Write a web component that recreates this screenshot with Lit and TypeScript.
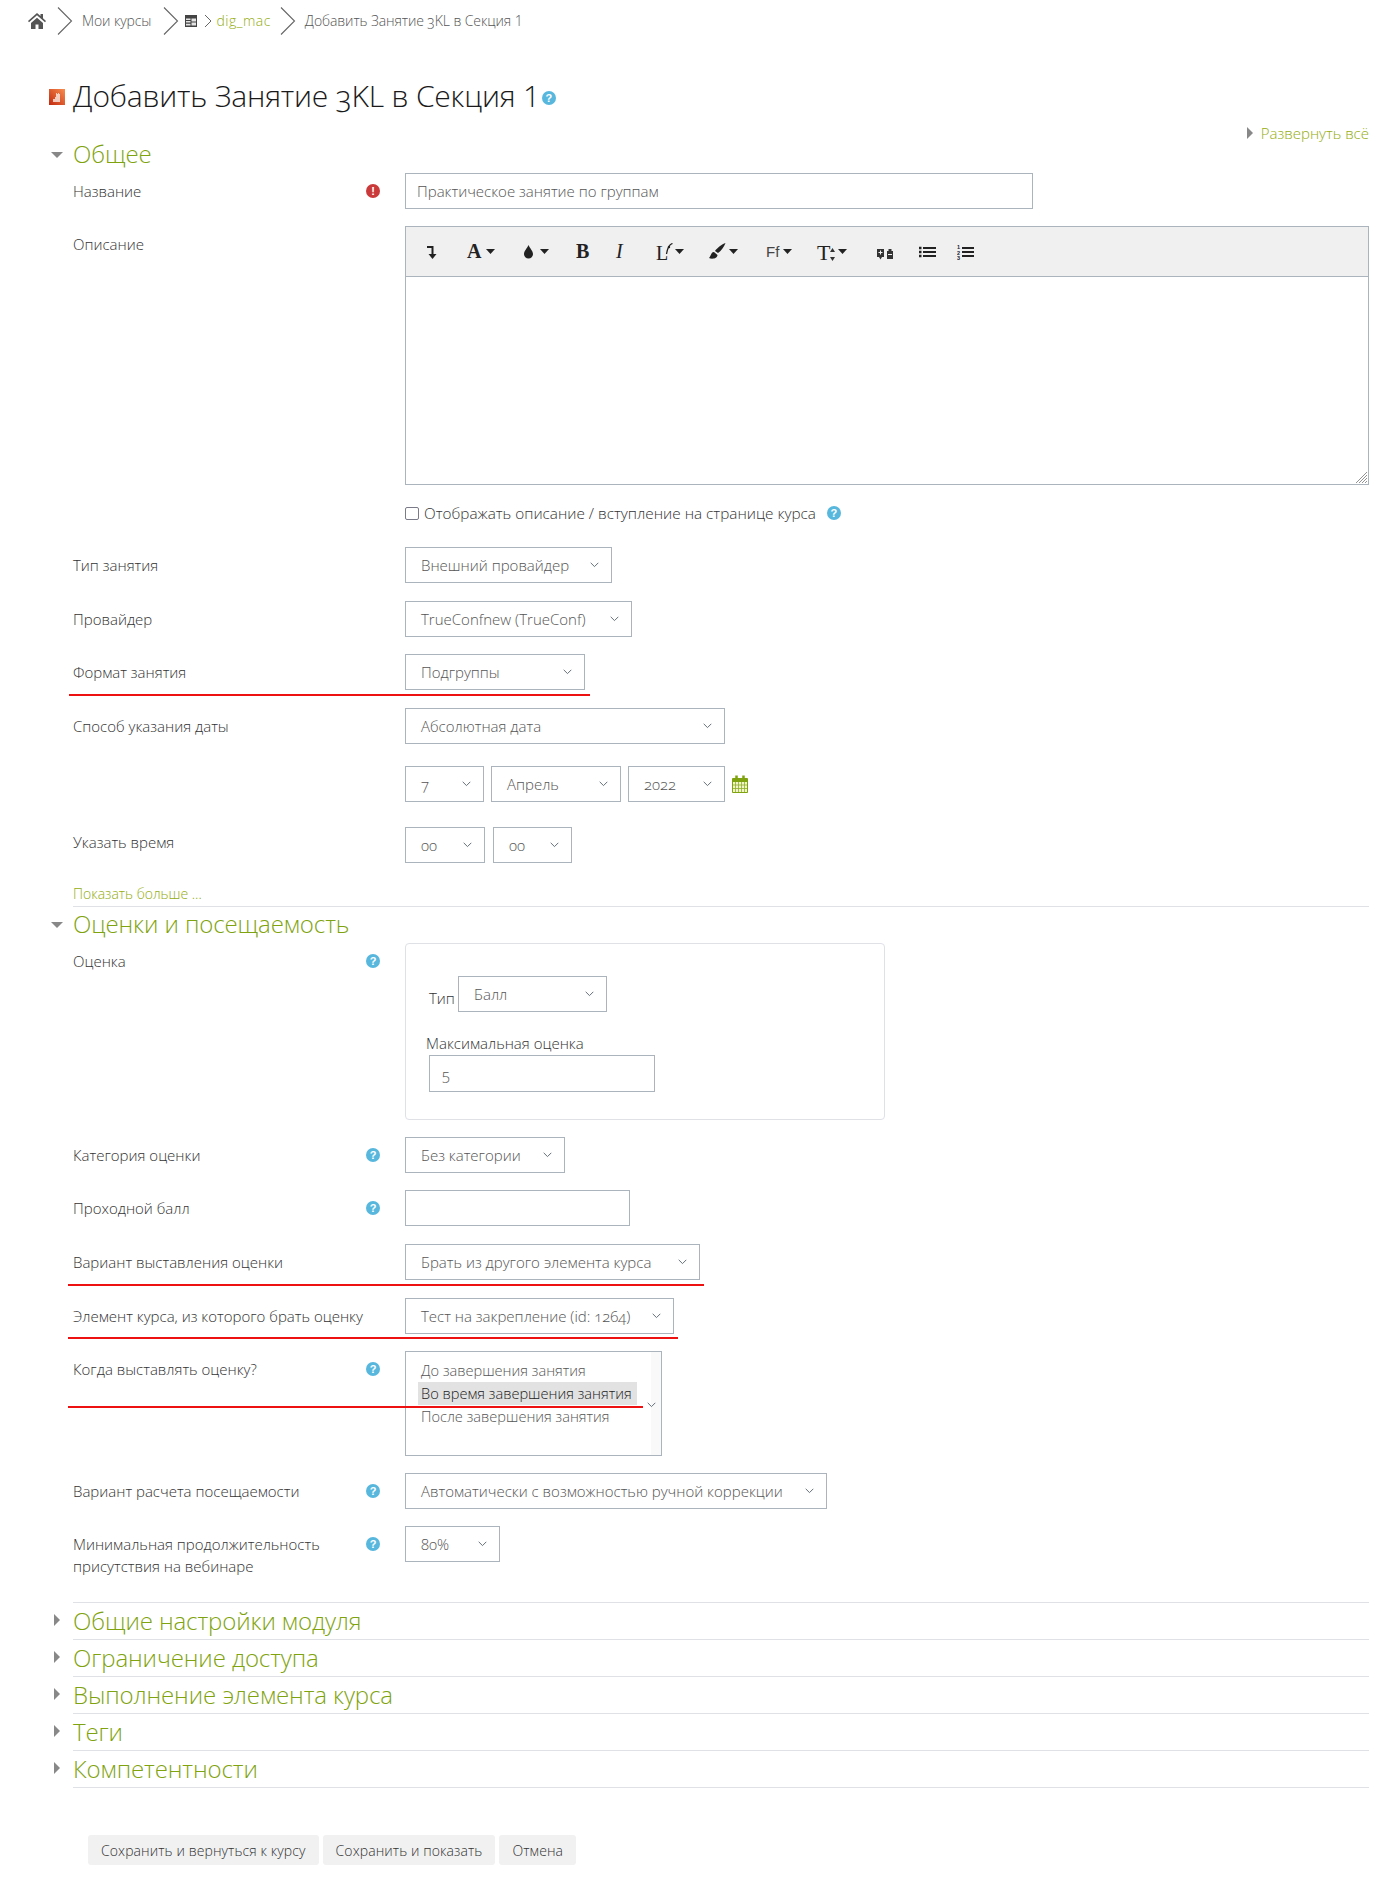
import { LitElement, html, css } from "lit";
import { customElement } from "lit/decorators.js";

const chevron = html`<svg class="chev" width="9" height="6" viewBox="0 0 9 6"><path d="M.7 .8l3.800 3.800L8.300 .8" fill="none" stroke="#66707a" stroke-width="1"/></svg>`;
const big = html`<svg class="bc-big" width="16" height="28" viewBox="0 0 16 28"><path d="M1 .5L14.500 14 1 27.500" fill="none" stroke="#666" stroke-width="1.1"/></svg>`;
const help = (c = "") => html`<span class="help ${c}">?</span>`;

@customElement("app-root")
export class AppRoot extends LitElement {
  static styles = css`
    :host { display: block; position: relative; width: 1382px; height: 1892px; background: #fff; overflow: hidden;
      font-family: "Open Sans", "Liberation Sans", sans-serif; font-weight: 300; font-size: 15px; color: #333; font-variant-numeric: oldstyle-nums; }
    * { box-sizing: border-box; }
    .lin { font-variant-numeric: lining-nums; }
    .crumbs { display: flex; align-items: center; height: 28px; margin: 7px 0 0 28px; font-size: 14px; color: #555; letter-spacing: -0.1px; }
    .crumbs a { color: #94ad10; letter-spacing: .5px; }
    .crumbs span, .crumbs a { margin-bottom: 2px; }
    .home { margin-right: 11px; flex: none; }
    .bc-big { margin-right: 9px; flex: none; }
    .crumbs .t1 { margin-right: 12px; }
    .crumbs .t2 { margin-right: 9px; }
    .tbl { margin-left: -3px; flex: none; }
    .bc-small { margin: 0 4px 0 7px; flex: none; }
    .title { display: flex; align-items: center; margin: 44px 0 0 49px; height: 36px; }
    .title h1 { margin: 0 0 4px 8px; font-weight: 300; font-size: 30px; color: #1a1a1a; letter-spacing: -0.2px; white-space: nowrap; }
    .expand { display: flex; justify-content: flex-end; align-items: center; gap: 8px; margin: 8px 13px 0 0; height: 20px; color: #94ad10; font-size: 15px; }
    .arrow-r { width: 0; height: 0; border-left: 6px solid #888; border-top: 6px solid transparent; border-bottom: 6px solid transparent; }
    .arrow-d { width: 0; height: 0; border-top: 6px solid #888; border-left: 6px solid transparent; border-right: 6px solid transparent; }
    .sec { display: flex; align-items: center; height: 30px; margin-left: 51px; color: #7fa30e; font-size: 24px; letter-spacing: -0.1px; }
    .sec .h { margin-left: 10px; padding-bottom: 4px; }
    .row { display: flex; margin-left: 73px; margin-right: 13px; }
    .row.t .lab { padding-top: 4px; }
    .lab { width: 332px; display: flex; justify-content: space-between; padding-right: 25px; line-height: 22px; padding-top: 7px; flex: none; }
    .lab span:first-child { white-space: pre-line; }
    .ctl { display: flex; gap: 7px; align-items: flex-start; min-width: 0; flex: 1; }
    .cal { align-self: center; flex: none; }
    .sel, .inp { height: 36px; border: 1px solid #abb4bd; display: flex; align-items: center; padding-left: 15px; color: #555; position: relative; background: #fff; flex: none; white-space: nowrap; }
    .inp { padding-left: 11px; }
    .inp.mx { width: 226px; height: 37px; margin-left: 3px; padding-left: 12px; }
    .chev { position: absolute; right: 12px; top: 14px; }
    .help { display: inline-flex; align-items: center; justify-content: center; width: 14px; height: 14px; margin-top: 4px; border-radius: 50%; background: #58b7dd; color: #fff; font: 700 11px/14px "Liberation Sans", sans-serif; flex: none; }
    .help.h1 { margin: 2px 0 0 2px; }
    .err { width: 14px; height: 14px; margin-top: 4px; border-radius: 50%; background: #cb3a3a; color: #fff; font: 700 11px/14px "Liberation Sans", sans-serif; text-align: center; flex: none; }
    .editor { flex: 1; border: 1px solid #abb4bd; height: 259px; display: flex; flex-direction: column; position: relative; }
    .tb { height: 50px; background: #f0f0f0; border-bottom: 1px solid #abb4bd; position: relative; color: #222; flex: none; }
    .tb > * { position: absolute; }
    .grip { position: absolute; right: 1px; bottom: 1px; }
    .check { display: flex; align-items: center; height: 20px; margin: 18px 0 0 405px; font-size: 15.300px; color: #333; }
    .check i { width: 14px; height: 13px; border: 1.600px solid #7a7a88; border-radius: 2px; margin-right: 5px; flex: none; }
    .check .help { margin: 0 0 0 11px; }
    .more { margin: 21px 13px 0 73px; height: 23px; border-bottom: 1px solid #dfe1e6; color: #94ad10; font-size: 14px; line-height: 20px; }
    .box { width: 480px; height: 177px; border: 1px solid #dfe1e6; border-radius: 4px; padding: 32px 0 0 20px; display: flex; flex-direction: column; align-items: flex-start; }
    .tipr { display: flex; align-items: center; gap: 4px; margin-left: 3px; }
    .tipr b { font-weight: 300; padding-top: 8px; color: #333; width: 25px; white-space: nowrap; }
    .maxl { margin: 20px 0 0 0; height: 23px; line-height: 22px; color: #333; }
    .list { width: 257px; height: 105px; border: 1px solid #abb4bd; padding: 7px 0 0 12px; color: #555; position: relative; flex: none; line-height: 23px; font-size: 14.600px; background: linear-gradient(to right, #fff 245px, #f9f9f9 245px); }
    .list div { padding-left: 3px; width: 219px; white-space: nowrap; }
    .list .on { background: #e2e2e2; color: #222; }
    .list .chev { top: 50px; right: 5px; }
    .col-sec { display: flex; align-items: center; height: 37px; margin: 0 13px 0 73px; padding-bottom: 2px; border-bottom: 1px solid #dfe1e6; color: #7fa30e; font-size: 24px; position: relative; letter-spacing: -0.1px; }
    .col-sec .arrow-r { position: absolute; left: -19px; top: 11px; }
    .top-line { margin: 25px 13px 0 73px; border-top: 1px solid #dfe1e6; }
    .btns { display: flex; gap: 4px; margin: 47px 0 0 88px; }
    .btn { height: 30px; background: #f1f1f2; border-radius: 3px; padding: 0 13px; display: flex; align-items: center; color: #333; white-space: nowrap; font-size: 14px; letter-spacing: .1px; }
    .red { position: absolute; height: 2px; background: #ee1111; }
  `;

  sel(text: string, w: number) {
    return html`<div class="sel" style="width:${w}px">${text}${chevron}</div>`;
  }

  rw(label: string, ctl: unknown, mt: number, hp = false, err = false, cls = "") {
    return html`<div class="row ${cls}" style="margin-top:${mt}px">
      <div class="lab"><span>${label}</span>${hp ? help() : ""}${err ? html`<span class="err">!</span>` : ""}</div>
      <div class="ctl">${ctl}</div>
    </div>`;
  }

  toolbar() {
    const caret = (x: number) => html`<svg style="left:${x}px;top:22px" width="9" height="5" viewBox="0 0 9 5"><path d="M0 0h9L4.500 5z" fill="#222"/></svg>`;
    const serif = `font-family:"Liberation Serif",serif;`;
    return html`<div class="tb">
      <svg style="left:20px;top:18px" width="11" height="14" viewBox="0 0 11 14"><path d="M1 2h5.500v8" fill="none" stroke="#222" stroke-width="2"/><path d="M6.500 14L2.500 9h8z" fill="#222"/></svg>
      <span style="${serif}left:61px;top:13px;font-size:20px;font-weight:700;line-height:22px">A</span>${caret(80)}
      <svg style="left:117px;top:18px" width="11" height="14" viewBox="0 0 11 14"><path d="M5.500 0C7 3.500 10 6 10 9a4.500 4.500 0 0 1-9 0C1 6 4 3.500 5.500 0z" fill="#222"/></svg>${caret(134)}
      <span style="${serif}left:170px;top:13px;font-size:20px;font-weight:700;line-height:22px">B</span>
      <span style="${serif}left:210px;top:13px;font-size:20px;font-style:italic;line-height:22px">I</span>
      <span style="${serif}left:250px;top:15px;font-size:20px;line-height:22px">L</span>
      <svg style="left:258px;top:16px" width="9" height="14" viewBox="0 0 9 14"><path d="M8.500 .5C5 1.500 3.500 5 2.500 11" fill="none" stroke="#222" stroke-width="1.300"/><circle cx="5" cy="4" r="1.200" fill="#222"/></svg>${caret(269)}
      <svg style="left:303px;top:16px" width="17" height="16" viewBox="0 0 17 16"><path d="M16.500 0C13 1 8 5 6 8l3 2c3-2 6-6 7.500-10zM5 9C2 9 2.500 12 0 15c3 1.500 8.500.5 8.500-3z" fill="#222"/></svg>${caret(323)}
      <span style="left:360px;top:15px;font-size:15px;line-height:20px;font-weight:400;color:#444;font-family:'Liberation Sans',sans-serif">Ff</span>${caret(377)}
      <span style="${serif}left:411px;top:15px;font-size:22px;line-height:22px">T</span>
      <svg style="left:424px;top:21px" width="5" height="13" viewBox="0 0 5 13"><path d="M2.500 0L5 4H0zM2.500 13L0 9h5z" fill="#333"/></svg>${caret(432)}
      <svg style="left:471px;top:21px" width="16" height="12" viewBox="0 0 16 12"><path d="M0 1h7v8H0zM2 9h3l-1.500 2.500z" fill="#333"/><path d="M3.500 2.500v4M1.500 4.500h4" stroke="#f0f0f0"/><path d="M10 3h6v8h-6zM11.500 1h3v2h-3z" fill="#333"/><path d="M11 6.500h4" stroke="#f0f0f0"/></svg>
      <svg style="left:513px;top:19px" width="17" height="12" viewBox="0 0 17 12"><path d="M4 2h13M4 6h13M4 10h13" stroke="#222" stroke-width="2"/><path d="M0 .7h2.500v2.500H0zM0 4.700h2.500v2.500H0zM0 8.700h2.500v2.500H0z" fill="#222"/></svg>
      <svg style="left:551px;top:17px" width="17" height="16" viewBox="0 0 17 16"><path d="M5 4h12M5 8h12M5 12h12" stroke="#222" stroke-width="2"/><g font-size="5.500" font-weight="700" fill="#222" font-family="Liberation Sans, sans-serif"><text x="0" y="5">1</text><text x="0" y="10.500">2</text><text x="0" y="16">3</text></g></svg>
    </div>
    <svg class="grip" width="11" height="11" viewBox="0 0 11 11"><path d="M11 0L0 11M11 3L3 11M11 6L6 11M11 9L9 11" stroke="#777" stroke-width=".8"/></svg>`;
  }

  render() {
    return html`
      <div class="crumbs">
        <svg class="home" width="18" height="16" viewBox="0 0 18 16"><path d="M9 0L0 8l1 1.200L9 2.200l8 7 1-1.200-3-2.700V1h-2.500v2.100zM3 10v6h4.500v-4.500h3V16H15v-6L9 4.800z" fill="#555"/></svg>
        ${big}<span class="t1">Мои курсы</span>${big}
        <svg class="tbl" width="12" height="12" viewBox="0 0 12 12"><path d="M0 0h12v12H0z" fill="#444"/><path d="M1 3.500h4.500v1.500H1zM1 6h4.500v1.500H1zM1 8.700h4.500v1.800H1zM6.500 3.500H11v3H6.500zM6.500 7.500H11v3H6.500z" fill="#e4e4e4"/></svg>
        <svg class="bc-small" width="8" height="14" viewBox="0 0 8 14"><path d="M1 1l6 6-6 6" fill="none" stroke="#666"/></svg>
        <a class="t2">dig_mac</a>${big}<span>Добавить Занятие 3KL в Секция <span class="lin">1</span></span>
      </div>
      <div class="title">
        <svg width="16" height="16" viewBox="0 0 16 16"><defs><linearGradient id="g" x1="1" y1="0" x2="0" y2="1"><stop offset="0" stop-color="#f88d4f"/><stop offset="1" stop-color="#c2290e"/></linearGradient></defs><path d="M0 0h16v16H0z" fill="url(#g)"/><path d="M4 13v-3h2V8h1V4h1v1h1V4h1v1h1v8z" fill="#fff" opacity=".7"/></svg>
        <h1>Добавить Занятие 3KL в Секция <span class="lin">1</span></h1>${help("h1")}
      </div>
      <div class="expand"><i class="arrow-r"></i>Развернуть всё</div>
      <div class="sec" style="margin-top:-3px"><i class="arrow-d"></i><span class="h">Общее</span></div>

      ${this.rw("Название", html`<div class="inp" style="width:628px">Практическое занятие по группам</div>`, 3, false, true)}
      ${this.rw("Описание", html`<div class="editor">${this.toolbar()}</div>`, 17)}
      <div class="check"><i></i>Отображать описание / вступление на странице курса${help()}</div>
      ${this.rw("Тип занятия", this.sel("Внешний провайдер", 207), 24)}
      ${this.rw("Провайдер", this.sel("TrueConfnew (TrueConf)", 227), 18)}
      ${this.rw("Формат занятия", this.sel("Подгруппы", 180), 17)}
      ${this.rw("Способ указания даты", this.sel("Абсолютная дата", 320), 18)}
      ${this.rw("", html`${this.sel("7", 79)}${this.sel("Апрель", 130)}${this.sel("2022", 97)}
        <svg class="cal" width="16" height="18" viewBox="0 0 16 18"><path d="M.5 3.500h15v14H.5z" fill="#f1f5c8" stroke="#7fa30e"/><path d="M1 4h14v3H1z" fill="#7fa30e"/><path d="M4.500 .5v4M11.500 .5v4" stroke="#7fa30e" stroke-width="2.500"/><path d="M3.500 7v10M6.500 7v10M9.500 7v10M12.500 7v10M1 10h14M1 13.500h14" stroke="#8fae2a" stroke-width=".8"/></svg>`, 22)}
      ${this.rw("Указать время", html`<div style="display:flex;gap:8px">${this.sel("00", 80)}${this.sel("00", 79)}</div>`, 25, false, false, "t")}
      <div class="more">Показать больше ...</div>
      <div class="sec" style="margin-top:3px"><i class="arrow-d"></i><span class="h">Оценки и посещаемость</span></div>

      ${this.rw("Оценка", html`<div class="box">
        <div class="tipr"><b>Тип</b>${this.sel("Балл", 149)}</div>
        <div class="maxl">Максимальная оценка</div>
        <div class="inp mx">5</div>
      </div>`, 3, true)}
      ${this.rw("Категория оценки", this.sel("Без категории", 160), 17, true)}
      ${this.rw("Проходной балл", html`<div class="inp" style="width:225px"></div>`, 17, true)}
      ${this.rw("Вариант выставления оценки", this.sel("Брать из другого элемента курса", 295), 18)}
      ${this.rw("Элемент курса, из которого брать оценку", this.sel("Тест на закрепление (id: 1264)", 269), 18)}
      ${this.rw("Когда выставлять оценку?", html`<div class="list"><div>До завершения занятия</div><div class="on">Во время завершения занятия</div><div>После завершения занятия</div>${chevron}</div>`, 17, true)}
      ${this.rw("Вариант расчета посещаемости", this.sel("Автоматически с возможностью ручной коррекции", 422), 17, true)}
      ${this.rw("Минимальная продолжительность\nприсутствия на вебинаре", this.sel("80%", 95), 17, true)}

      <div class="top-line"></div>
      ${["Общие настройки модуля", "Ограничение доступа", "Выполнение элемента курса", "Теги", "Компетентности"].map(
        (t) => html`<div class="col-sec"><i class="arrow-r"></i>${t}</div>`
      )}
      <div class="btns">
        <div class="btn">Сохранить и вернуться к курсу</div>
        <div class="btn">Сохранить и показать</div>
        <div class="btn">Отмена</div>
      </div>

      <div class="red" style="left:69px;top:694px;width:521px"></div>
      <div class="red" style="left:68px;top:1284px;width:636px"></div>
      <div class="red" style="left:68px;top:1337px;width:610px"></div>
      <div class="red" style="left:68px;top:1406px;width:575px"></div>
    `;
  }
}
